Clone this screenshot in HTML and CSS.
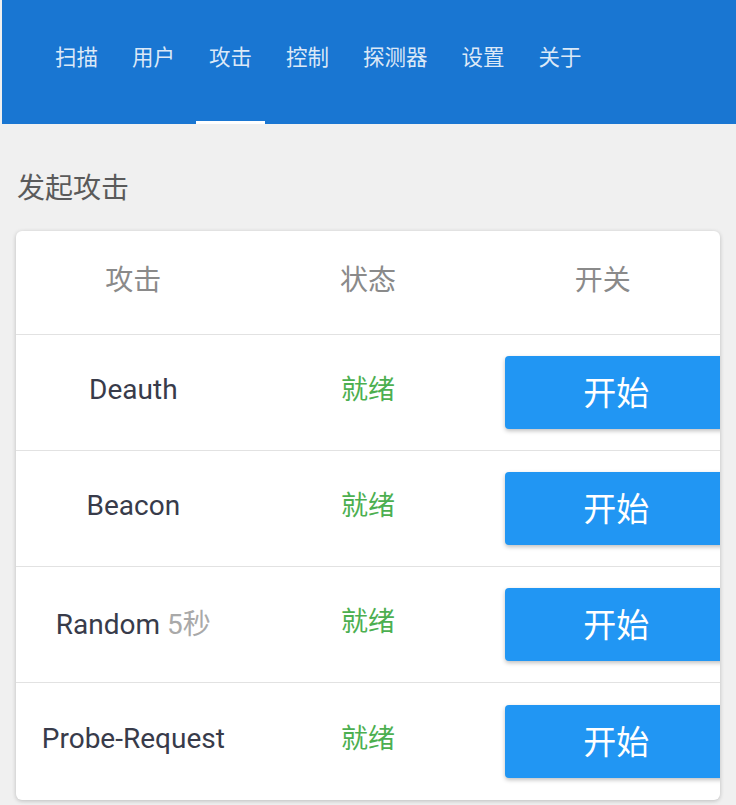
FILE: index.html
```html
<!DOCTYPE html>
<html lang="zh">
<head>
<meta charset="utf-8">
<link rel="stylesheet" href="styles.css">
</head>
<body>
<header class="appbar">
  <nav class="tabs">
    <a class="tab">扫描</a>
    <a class="tab">用户</a>
    <a class="tab active">攻击</a>
    <a class="tab">控制</a>
    <a class="tab">探测器</a>
    <a class="tab">设置</a>
    <a class="tab">关于</a>
  </nav>
</header>
<main class="content">
  <h1 class="title">发起攻击</h1>
  <section class="card">
    <div class="row head">
      <div class="cell">攻击</div>
      <div class="cell">状态</div>
      <div class="cell">开关</div>
    </div>
    <div class="row">
      <div class="cell name">Deauth</div>
      <div class="cell status">就绪</div>
      <div class="cell action"><button class="btn">开始</button></div>
    </div>
    <div class="row">
      <div class="cell name">Beacon</div>
      <div class="cell status">就绪</div>
      <div class="cell action"><button class="btn">开始</button></div>
    </div>
    <div class="row">
      <div class="cell name">Random <span class="hint">5秒</span></div>
      <div class="cell status">就绪</div>
      <div class="cell action"><button class="btn">开始</button></div>
    </div>
    <div class="row last">
      <div class="cell name">Probe-Request</div>
      <div class="cell status">就绪</div>
      <div class="cell action"><button class="btn">开始</button></div>
    </div>
  </section>
</main>
</body>
</html>
```
FILE: styles.css
```css
* { box-sizing: border-box; }
html, body { margin: 0; padding: 0; }
body {
  background: #f0f0f0;
  font-family: Roboto, "Noto Sans CJK SC", sans-serif;
  width: 736px;
  height: 805px;
  overflow: hidden;
}
.appbar {
  background: #1976d2;
  height: 124px;
  margin-left: 2px;
  display: flex;
  align-items: flex-end;
}
.tabs {
  display: flex;
  gap: 8px;
  padding-left: 40px;
}
.tab {
  display: flex;
  align-items: center;
  justify-content: center;
  height: 124px;
  padding: 0 13px 11px;
  font-family: "Noto Sans CJK SC", sans-serif;
  font-size: 21.5px;
  color: rgba(255,255,255,0.85);
  border-bottom: 3px solid transparent;
}
.tab.active { border-bottom-color: #fff; }
.content { padding: 0 16px; }
.title {
  margin: 0;
  padding: 43px 0 0 1px;
  height: 107px;
  font-family: "Noto Sans CJK SC", sans-serif;
  font-weight: 400;
  font-size: 28px;
  line-height: 38px;
  color: #5a5a5a;
}
.card {
  background: #fff;
  border-radius: 6px;
  box-shadow: 0 1px 4px rgba(0,0,0,0.22);
  overflow: hidden;
  width: 704px;
}
.row {
  display: grid;
  grid-template-columns: minmax(0,1fr) minmax(0,1fr) minmax(0,1fr);
  align-items: center;
  height: 116px;
  border-bottom: 1px solid #e2e2e2;
}
.row.head { height: 104px; }
.row.last { border-bottom: none; height: 117px; }
.cell {
  text-align: center;
  font-family: "Noto Sans CJK SC", sans-serif;
  font-size: 27px;
  white-space: nowrap;
  padding-bottom: 10px;
}
.head .cell { color: #8a8a8a; font-size: 28px; }
.name {
  font-family: Roboto, "Noto Sans CJK SC", sans-serif;
  font-size: 28px;
  color: #383b4a;
  padding-bottom: 6px;
}
.hint { color: #a9a9a9; font-family: Roboto, "Noto Sans CJK SC", sans-serif; }
.status { color: #4caf50; }
.action { text-align: left; padding-left: 20px; padding-bottom: 0; overflow: visible; }
.btn {
  width: 222px;
  height: 73px;
  border: none;
  border-radius: 4px;
  background: #2196f3;
  color: #fff;
  font-family: "Noto Sans CJK SC", sans-serif;
  font-size: 33px;
  box-shadow: 0 2px 4px rgba(0,0,0,0.25);
  padding: 0 0 4px;
}
```
